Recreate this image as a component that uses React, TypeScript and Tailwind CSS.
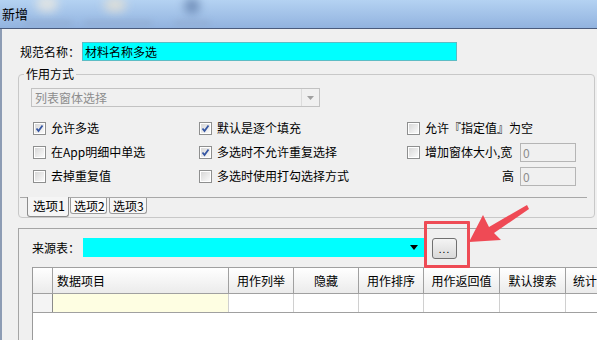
import React from 'react'

const font = { fontFamily: '"Noto Sans CJK SC", "Liberation Sans", sans-serif' }

function Check({ checked }: { checked?: boolean }) {
    return (
        <span className="w-[13px] h-[13px] border border-[#8e8f8f] bg-white p-[1px] shrink-0 flex">
            <span className="flex-1 bg-linear-to-br from-[#d8d8d8] to-[#fafafa] flex items-center justify-center">
                {checked && (
                    <svg width="9" height="9" viewBox="0 0 9 9">
                        <path d="M1.5 4.5 L3.5 7 L7.5 1.5" fill="none" stroke="#3556a3" strokeWidth={1.8} />
                    </svg>
                )}
            </span>
        </span>
    )
}

function CheckItem({ label, checked }: { label: string; checked?: boolean }) {
    return (
        <div className="flex items-center gap-[5px] h-[24px]">
            <Check checked={checked} />
            <span className="whitespace-nowrap">{label}</span>
        </div>
    )
}

const cols = [
    { name: '', w: 'w-[20px]', align: '' },
    { name: '数据项目', w: 'w-[176px]', align: 'pl-[4px]' },
    { name: '用作列举', w: 'w-[65px]', align: 'justify-center' },
    { name: '隐藏', w: 'w-[65px]', align: 'justify-center' },
    { name: '用作排序', w: 'w-[65px]', align: 'justify-center' },
    { name: '用作返回值', w: 'w-[76px]', align: 'justify-center' },
    { name: '默认搜索', w: 'w-[66px]', align: 'justify-center' },
    { name: '统计', w: 'w-[70px]', align: 'pl-[7px]' },
]

export default function App() {
    return (
        <div className="w-[597px] h-[340px] overflow-hidden relative flex flex-col text-[12px] text-black bg-[#f0f0f0]" style={font}>
            {/* Title bar */}
            <div className="h-[29px] shrink-0 relative overflow-hidden bg-linear-to-b from-[#b4d2f2] to-[#92b3df] border-b border-[#4a5b7c]">
                <div className="absolute left-[36px] top-[-4px] w-[22px] h-[16px] rounded-full bg-[#f2ecdf] opacity-70 blur-[5px]" />
                <div className="absolute left-[104px] top-[-2px] w-[22px] h-[14px] rounded-full bg-[#eee4d0] opacity-70 blur-[5px]" />
                <div className="absolute left-[184px] top-[-2px] w-[16px] h-[16px] rounded-full bg-[#5a78a6] opacity-70 blur-[5px]" />
                <div className="absolute left-[24px] top-[21px] w-[48px] h-[4px] bg-[#8ea4c6] opacity-60 blur-[3px]" />
                <div className="absolute left-[84px] top-[21px] w-[68px] h-[4px] bg-[#8ea4c6] opacity-60 blur-[3px]" />
                <div className="absolute left-[174px] top-[21px] w-[36px] h-[4px] bg-[#8ea4c6] opacity-60 blur-[3px]" />
                <span className="relative pl-[2px] leading-[28px] text-[13px]">新增</span>
            </div>

            {/* Body */}
            <div className="flex-1 flex flex-col border-l-2 border-[#8d9cb4]">
                <div className="flex items-center mt-[13px] ml-[18px] h-[19px]">
                    <span className="w-[62px] whitespace-nowrap">规范名称：</span>
                    <div className="w-[375px] h-[19px] bg-[#00ffff] border border-[#5cbcc4] flex items-center pl-[2px]">材料名称多选</div>
                </div>

                <fieldset className="ml-[16px] mt-[5px] w-[577px] border border-[#c8c8c8] rounded-[4px] px-[1px] pb-0">
                    <legend className="ml-[4px] px-[2px] leading-[16px]">作用方式</legend>
                    <div className="ml-[11px] mt-[6px] w-[289px] h-[19px] border border-[#c2c2c2] flex items-center">
                        <span className="flex-1 pl-[3px] text-[#8d8d8d]">列表窗体选择</span>
                        <div className="w-[18px] h-[17px] border-l border-[#dcdcdc] flex items-center justify-center">
                            <svg width="7" height="4" viewBox="0 0 7 4"><path d="M0 0 H7 L3.5 4 Z" fill="#a0a0a0" /></svg>
                        </div>
                    </div>

                    <div className="ml-[13px] mt-[9px] grid grid-cols-[166px_208px_169px]">
                        <CheckItem label="允许多选" checked />
                        <CheckItem label="默认是逐个填充" checked />
                        <CheckItem label="允许『指定值』为空" />
                        <CheckItem label="在App明细中单选" />
                        <CheckItem label="多选时不允许重复选择" checked />
                        <div className="flex items-center gap-[5px] h-[24px]">
                            <Check />
                            <span className="flex-1 whitespace-nowrap">增加窗体大小,宽</span>
                            <div className="w-[56px] h-[19px] border border-[#b5b5b5] pl-[2px] leading-[17px] text-[#8d8d8d]">0</div>
                        </div>
                        <CheckItem label="去掉重复值" />
                        <CheckItem label="多选时使用打勾选择方式" />
                        <div className="flex items-center justify-end gap-[6px] h-[24px]">
                            <span>高</span>
                            <div className="w-[56px] h-[19px] border border-[#b5b5b5] pl-[2px] leading-[17px] text-[#8d8d8d]">0</div>
                        </div>
                    </div>

                    <div className="mt-[9px] w-[567px] h-[20px] border-t border-[#a8a8a8] flex items-start">
                        <div className="ml-[7px] mt-[-1px] w-[42px] h-[20px] border border-t-0 border-[#8c8c8c] rounded-b-[3px] bg-[#f5f5f5] pl-[5px] leading-[18px] text-[12.5px]">选项1</div>
                        <div className="ml-[1px] w-[37px] h-[16px] border border-t-0 border-[#9a9a9a] rounded-b-[3px] bg-[#fafafa] pl-[3px] leading-[15px]">选项2</div>
                        <div className="ml-[2px] w-[38px] h-[16px] border border-t-0 border-[#9a9a9a] rounded-b-[3px] bg-[#f6f6f6] pl-[3px] leading-[15px]">选项3</div>
                    </div>
                </fieldset>

                <div className="ml-[16px] mt-[10px] flex-1 border-t border-l border-[#a5a5a5] pt-[9px] pl-[13px] overflow-hidden">
                    <div className="flex items-start">
                        <span className="w-[51px] leading-[19px] whitespace-nowrap">来源表：</span>
                        <div className="w-[341px] h-[19px] bg-[#00ffff] flex items-center justify-end pr-[6px]">
                            <svg width="8" height="5" viewBox="0 0 8 5"><path d="M0 0 H8 L4 5 Z" fill="#000" /></svg>
                        </div>
                        <div className="ml-[8px] w-[25px] h-[21px] rounded-[3px] border border-[#707070] bg-linear-to-b from-[#f4f4f4] to-[#d9d9d9] flex items-center justify-center text-[10px] tracking-[1px] leading-none">...</div>
                    </div>

                    <div className="mt-[8px] w-[700px] bg-white border-l border-[#9a9a9a] h-[80px]">
                        <div className="flex h-[27px] border-t border-b border-[#a0a0a0] bg-linear-to-b from-white to-[#ebebeb]">
                            {cols.map((c, i) => (
                                <div key={i} className={`${c.w} ${c.align} shrink-0 border-r border-[#a0a0a0] flex items-center whitespace-nowrap`}>
                                    {c.name}
                                </div>
                            ))}
                        </div>
                        <div className="flex h-[19px] border-b border-[#a0a0a0]">
                            {cols.map((c, i) => (
                                <div
                                    key={i}
                                    className={`${c.w} shrink-0 border-r ${i === 0 ? 'border-[#8a8a8a] bg-[#f4f4f4]' : i === 1 ? 'border-[#d0d0d0] bg-[#fefee2]' : 'border-[#d0d0d0]'}`}
                                />
                            ))}
                        </div>
                    </div>
                </div>
            </div>

            {/* Red highlight and arrow */}
            <div className="absolute left-[424px] top-[221px] w-[46px] h-[47px] border-[3px] border-[#ee4b55] rounded-[1px]" />
            <svg className="absolute left-0 top-0 pointer-events-none" width="597" height="340">
                <polygon points="469,242 483,215 489,227 527,205 529,209 494,233 501,240" fill="#ef4a55" />
            </svg>
        </div>
    )
}
